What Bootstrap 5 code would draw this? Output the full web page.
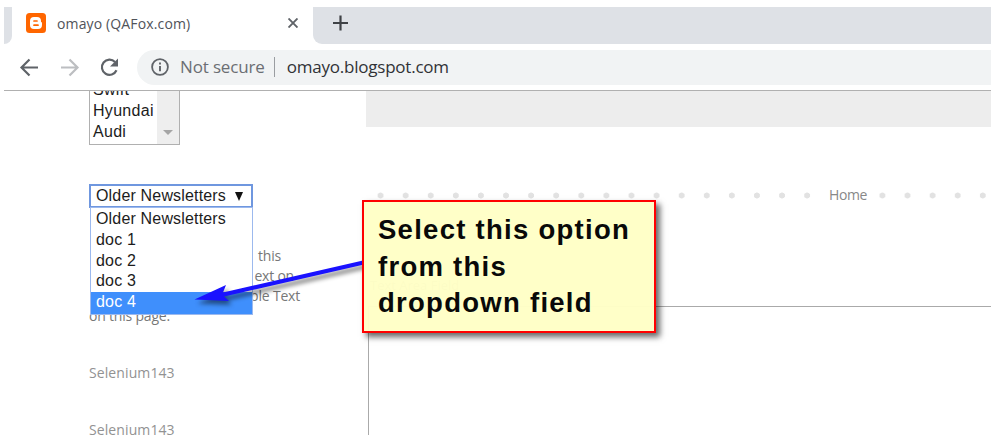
<!DOCTYPE html>
<html lang="en">
<head>
<meta charset="utf-8">
<title>omayo (QAFox.com)</title>
<link href="https://cdn.jsdelivr.net/npm/bootstrap@5.3.0/dist/css/bootstrap.min.css" rel="stylesheet">
<style>
body{width:998px;height:435px;overflow:hidden;background:#fff;padding:7px 7px 0 4px;font-family:"Open Sans",sans-serif}
.tabstrip{height:37px;background:#dee1e6}
.strip-left{width:8px;border-radius:0 0 8px 0;background:#dee1e6}
.tab{width:301px;background:#fff;padding-left:14px}
.tab .cap{font:14px "Open Sans",sans-serif;color:#50535a;letter-spacing:.14px;white-space:nowrap;width:231px;margin:-5px 0 0 11px}
.tab svg,.strip-right svg{margin-top:-5px}
.strip-right{background:#dee1e6;border-bottom-left-radius:9px;padding-left:20px}
.toolbar{height:46px}
.omnibox{height:35px;margin-left:18px;padding-left:14px;border-radius:18px 0 0 18px;background:#f1f3f4;font-size:17px;white-space:nowrap}
.omnibox .warn{color:#6b6e73;letter-spacing:-.15px;margin-left:11px}
.omnibox .sep{width:1px;height:20px;background:#9a9da1;margin:0 12px 0 9px}
.omnibox .addr{color:#303236;letter-spacing:-.22px}
.viewport{height:345px;border-top:1px solid #b0b0b0;overflow:hidden}
.side{width:277px;margin-left:85px;color:#8e8e8e;font:14px/20px "Open Sans",sans-serif}
.cars{width:91px;height:80px;margin-top:-26px;border:1px solid #b0b0b0;font:16px/21px "Liberation Sans",sans-serif;letter-spacing:.3px;color:#1c1c1c}
.cars .opts{padding:13px 0 0 3px}
.cars .track{width:22px;background:#eee}
.picker{width:164px;height:24px;margin-top:39px;border:2px solid #6f97df;color:#1c1c1c;font:16px/20px "Liberation Sans",sans-serif;letter-spacing:.17px;padding-left:5px;background:#fff;white-space:nowrap}
.picker>svg{margin-left:9px}
.options{left:-1px;top:21px;width:163px;height:108px;background:#fff;border:1px solid #9cb9ee;color:#1c1c1c;line-height:22px;z-index:2}
.options div{padding-left:5px;height:20.8px;white-space:nowrap}
.options .on{background:#3f8ffc;color:#fff;height:22px;line-height:20px;margin-top:1px}
.sample{margin-top:38px;color:#777;white-space:nowrap;letter-spacing:-.2px}
.sample .l1{width:192px}.sample .l2{width:205px}.sample .l3{width:211px}
.sel{color:#929292;margin-top:37px;letter-spacing:.1px}
.blank-bar{height:36px;background:#ededed}
.dots{height:24px;margin-top:57px;font-size:14px;color:#888;background:radial-gradient(circle at 12.5px 11.5px,#e2e2e2 2.7px,transparent 3.3px) 2px 0/25.1px 24px repeat-x}
.dots span{background:#fff;margin:-4px 0 0 455px;padding:0 8px;width:55px;letter-spacing:-.4px}
.fieldname{margin:67px 0 0 4px;height:20px;font-size:13px;line-height:20px;color:#888}
.area{margin:11px 0 0 2px;height:140px;border:1px solid #aaa;border-width:1px 0 0 1px}
.note{left:362px;top:200px;width:294px;height:133px;background:#ffffc6f8;border:2px solid #f00;box-shadow:4px 4px 6px #0009;padding:10px 0 0 14px;font:bold 27.5px/36.6px "Liberation Sans",sans-serif;letter-spacing:1.27px;color:#090909;z-index:4}
.note div{white-space:nowrap}
.pointer{left:0;top:0;z-index:3;filter:drop-shadow(3px 4px 2px #0007)}
</style>
</head>
<body class="position-relative">
<header>
<div class="tabstrip d-flex">
<div class="bg-white"><div class="strip-left h-100"></div></div>
<div class="tab d-flex align-items-center">
<svg width="20" height="20" viewBox="0 0 20 20"><rect width="20" height="20" rx="3.500" fill="#f60"/><path d="M8 4h3q4 0 4 4v1q1 0 1 1v2q0 4-4 4H8q-4 0-4-4V8q0-4 4-4z" fill="#fff"/><path d="M8 8h3M8 12.200h4" stroke="#f60" stroke-width="1.700" stroke-linecap="round"/></svg>
<span class="cap">omayo (QAFox.com)</span>
<svg width="10" height="10" viewBox="0 0 10 10"><path d="M.5.5l9 9M9.500.5l-9 9" stroke="#5f6368" stroke-width="1.900"/></svg>
</div>
<div class="bg-white flex-grow-1"><div class="strip-right h-100 d-flex align-items-center"><svg width="15" height="16" viewBox="0 0 15 16"><path d="M7.500.5v15M0 8h15" stroke="#3f4246" stroke-width="2.200"/></svg></div></div>
</div>
<div class="toolbar d-flex align-items-center">
<svg width="115" height="24" viewBox="0 0 115 24" fill="none" stroke-width="2.200"><path d="M34 12.500H18M25.500 4.500l-8 8 8 8" stroke="#5f6368"/><path d="M57 12.500h16M65.500 4.500l8 8-8 8" stroke="#bcbec1"/><path d="M112.500 15.300a7.600 7.600 0 1 1-1.500-8.300" stroke="#5f6368"/><path d="M114 3.500v8h-8z" fill="#5f6368"/></svg>
<div class="omnibox flex-grow-1 d-flex align-items-center">
<svg width="18" height="18" viewBox="0 0 18 18"><circle cx="9" cy="9" r="7.900" fill="none" stroke="#5f6368" stroke-width="1.800"/><path d="M9 8v5.300M9 4.600v2" stroke="#5f6368" stroke-width="1.900"/></svg>
<span class="warn">Not secure</span><span class="sep"></span><span class="addr">omayo.blogspot.com</span>
</div>
</div>
</header>
<main class="viewport d-flex">
<aside class="side flex-shrink-0">
<div class="cars d-flex justify-content-between">
<div class="opts">Swift<br>Hyundai<br>Audi</div>
<div class="track d-flex align-items-end justify-content-center"><svg class="mb-2" width="10" height="6"><path d="M0 0h10L5 5z" fill="#a5a5a5"/></svg></div>
</div>
<div class="picker position-relative d-flex align-items-center">Older Newsletters<svg width="8" height="9"><path d="M0 0h8L4 9z" fill="#111"/></svg>
<div class="options position-absolute"><div>Older Newsletters</div><div>doc 1</div><div>doc 2</div><div>doc 3</div><div class="on">doc 4</div></div>
</div>
<div class="sample"><div class="l1 text-end">this</div><div class="l2 text-end">ext on</div><div class="l3 text-end">ple Text</div><div>on this page.</div></div>
<div class="sel">Selenium143</div><div class="sel">Selenium143</div>
</aside>
<section class="flex-grow-1">
<div class="blank-bar"></div>
<div class="dots d-flex align-items-center"><span>Home</span></div>
<div class="fieldname">Text Area Field</div>
<div class="area"></div>
</section>
</main>
<svg class="pointer position-absolute" width="400" height="340"><path d="M194.500 299.500l31.500-14.500-3 7.500L363 260.500v4.200L224 296.500l5 4.500z" fill="#1a12ff"/></svg>
<div class="note position-absolute"><div>Select this option</div><div>from this</div><div>dropdown field</div></div>
<script src="https://cdn.jsdelivr.net/npm/bootstrap@5.3.0/dist/js/bootstrap.bundle.min.js"></script>
</body>
</html>
